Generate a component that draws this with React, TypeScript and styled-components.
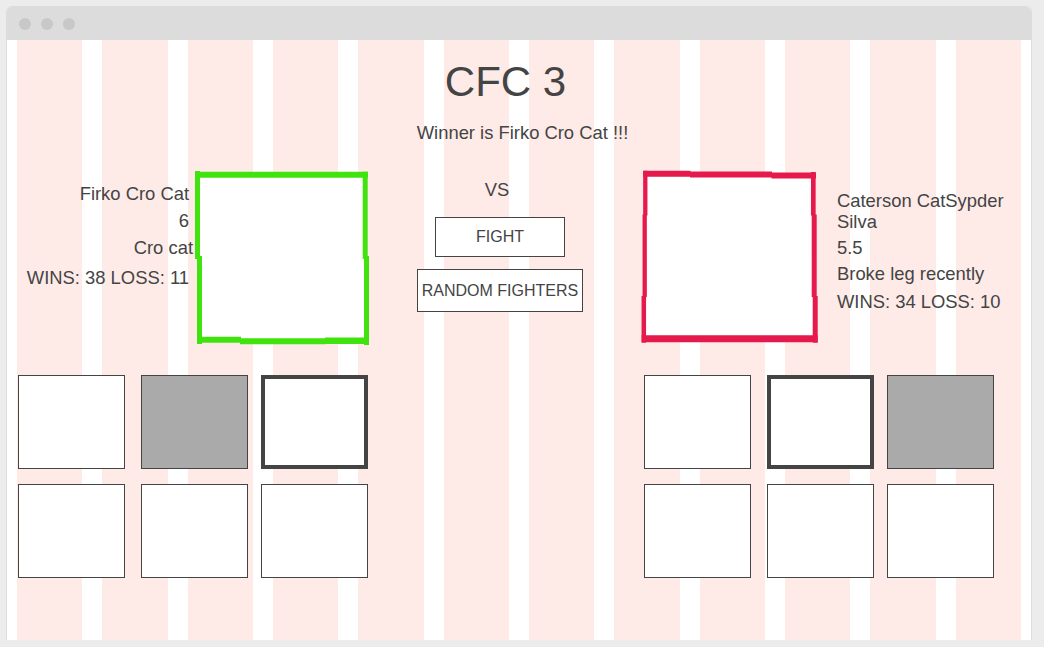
import styled, { createGlobalStyle } from 'styled-components';

const GlobalStyle = createGlobalStyle`
    body {
        margin: 0;
        background: #ececec;
        font-family: 'Liberation Sans', Arial, sans-serif;
        color: #444;
    }
`;

const Window = styled.div`
    width: 1024px;
    margin: 7px 0 0 7px;
    background: #fff;
    border-radius: 5px 5px 0 0;
    box-shadow: 0 0 0 1px #dcdcdc;
    overflow: hidden;
`;

const TitleBar = styled.div`
    height: 33px;
    background: #dcdcdc;
    display: flex;
    align-items: center;
    gap: 10px;
    padding-left: 12px;
`;

const Dot = styled.span`
    width: 12px;
    height: 12px;
    border-radius: 50%;
    background: #c8c8c8;
`;

const Content = styled.div`
    height: 600px;
    box-sizing: border-box;
    padding: 0 10px;
    background-image: repeating-linear-gradient(
        to right,
        #feebe8 0,
        #feebe8 65.33px,
        #fff 65.33px,
        #fff 85.33px
    );
    background-clip: content-box;
    background-origin: content-box;
`;

const Header = styled.div`
    display: flex;
    flex-direction: column;
    align-items: center;
    padding-top: 18px;
`;

const Title = styled.h1`
    margin: 0;
    padding-right: 27px;
    font-size: 42px;
    line-height: 48px;
    font-weight: normal;
`;

const Winner = styled.div`
    margin-top: 16px;
    padding-left: 7px;
    font-size: 18.4px;
    line-height: 21px;
`;

const FightersRow = styled.div`
    display: flex;
    align-items: flex-start;
    height: 175px;
    margin-top: 27px;
`;

const Fighter = styled.div`
    display: flex;
    align-items: flex-start;
`;

const FighterInfo = styled.div<{ $right?: boolean; $width: number; $top: number; $gap: number }>`
    width: ${({ $width }) => $width}px;
    margin-top: ${({ $top }) => $top}px;
    margin-left: ${({ $right }) => ($right ? 18 : 0)}px;
    display: flex;
    flex-direction: column;
    gap: ${({ $gap }) => $gap}px;
    text-align: ${({ $right }) => ($right ? 'left' : 'right')};
    font-size: 18.4px;
    line-height: 21px;
`;

const InfoLine = styled.div<{ $extra?: number; $shift?: number }>`
    margin-top: ${({ $extra }) => $extra || 0}px;
    margin-right: ${({ $shift }) => -($shift || 0)}px;
`;

const Middle = styled.div`
    width: 166px;
    margin: 0 58px 0 47px;
    padding-top: 9px;
    display: flex;
    flex-direction: column;
    align-items: center;
`;

const Vs = styled.div`
    font-size: 18.4px;
    line-height: 21px;
    margin-right: 6px;
`;

const ActionButton = styled.button<{ $width: number; $height: number }>`
    width: ${({ $width }) => $width}px;
    height: ${({ $height }) => $height}px;
    padding: 0;
    background: #fff;
    border: 1px solid #444;
    color: #444;
    font-family: 'Liberation Sans', Arial, sans-serif;
    font-size: 16px;
    margin-top: 12px;

    &:first-of-type {
        margin-top: 17px;
    }
`;

const BoxFrame = styled.svg<{ $top: number; $left: number }>`
    display: block;
    flex-shrink: 0;
    margin-top: ${({ $top }) => $top}px;
    margin-left: ${({ $left }) => $left}px;
`;

const ThumbsRow = styled.div`
    display: flex;
    margin-top: 30px;
    padding-left: 1px;
`;

const ThumbGrid = styled.div<{ $right?: boolean }>`
    display: grid;
    grid-template-columns: 123px 120px 107px;
    grid-auto-rows: 94px;
    row-gap: 15px;
    margin-left: ${({ $right }) => ($right ? 'auto' : '0')};
    margin-right: ${({ $right }) => ($right ? '27px' : '0')};
`;

const Thumb = styled.div<{ $bold?: boolean; $gray?: boolean }>`
    box-sizing: border-box;
    width: 107px;
    height: 94px;
    border: ${({ $bold }) => ($bold ? 4 : 1)}px solid #444;
    background: ${({ $gray }) => ($gray ? '#aaa' : '#fff')};
`;

type Seg = [number, number, number, number, number];

const greenSegs: Seg[] = [
    [0, 3.7, 173, 3.7, 6],
    [2.5, 0, 2.5, 88, 5],
    [4.5, 85, 4.5, 173, 5],
    [2, 168.7, 46, 168.7, 6],
    [45, 170.2, 131, 170.2, 6],
    [130, 169.8, 174, 169.8, 6.5],
    [170.2, 0.7, 170.2, 88, 5],
    [171.5, 85, 171.5, 174, 5],
];

const redSegs: Seg[] = [
    [2.3, 3.7, 49.5, 3.7, 6],
    [49, 4.5, 131, 4.5, 6],
    [130.5, 5.5, 175, 5.5, 6],
    [4.3, 0.7, 4.3, 45.5, 4.3],
    [3.7, 44.5, 3.7, 127, 4.3],
    [2.8, 126, 2.8, 172.7, 4.5],
    [0.7, 168.8, 176.7, 168.8, 7],
    [172.3, 2, 172.3, 45.5, 4.7],
    [173.2, 44.5, 173.2, 127, 5],
    [174.2, 126, 174.2, 172.7, 5],
];

function SketchBox({ color, segs, w, h, top, left, fill }: {
    color: string; segs: Seg[]; w: number; h: number; top: number; left: number;
    fill: [number, number, number, number];
}) {
    return (
        <BoxFrame width={w} height={h} viewBox={`0 0 ${w} ${h}`} $top={top} $left={left}>
            <rect x={fill[0]} y={fill[1]} width={fill[2]} height={fill[3]} fill="#fff" />
            {segs.map(([x1, y1, x2, y2, sw], i) => (
                <line key={i} x1={x1} y1={y1} x2={x2} y2={y2} stroke={color} strokeWidth={sw} />
            ))}
        </BoxFrame>
    );
}

function App() {
    return (
        <>
            <GlobalStyle />
            <Window>
                <TitleBar>
                    <Dot />
                    <Dot />
                    <Dot />
                </TitleBar>
                <Content>
                    <Header>
                        <Title>CFC 3</Title>
                        <Winner>Winner is Firko Cro Cat !!!</Winner>
                    </Header>

                    <FightersRow>
                        <Fighter>
                            <FighterInfo $width={172} $top={13} $gap={6}>
                                <InfoLine>Firko Cro Cat</InfoLine>
                                <InfoLine>6</InfoLine>
                                <InfoLine $shift={4}>Cro cat</InfoLine>
                                <InfoLine $extra={2.5}>WINS: 38 LOSS: 11</InfoLine>
                            </FighterInfo>
                            <SketchBox color="#41e30f" segs={greenSegs} w={175} h={175} top={1} left={6} fill={[2, 3, 170, 167]} />
                        </Fighter>

                        <Middle>
                            <Vs>VS</Vs>
                            <ActionButton $width={130} $height={40}>FIGHT</ActionButton>
                            <ActionButton $width={166} $height={43}>RANDOM FIGHTERS</ActionButton>
                        </Middle>

                        <Fighter>
                            <SketchBox color="#e5194b" segs={redSegs} w={178} h={174} top={0} left={0} fill={[4, 5, 169, 162]} />
                            <FighterInfo $right $width={184} $top={20} $gap={5}>
                                <InfoLine>Caterson CatSypder Silva</InfoLine>
                                <InfoLine>5.5</InfoLine>
                                <InfoLine>Broke leg recently</InfoLine>
                                <InfoLine $extra={1.5}>WINS: 34 LOSS: 10</InfoLine>
                            </FighterInfo>
                        </Fighter>
                    </FightersRow>

                    <ThumbsRow>
                        <ThumbGrid>
                            <Thumb />
                            <Thumb $gray />
                            <Thumb $bold />
                            <Thumb />
                            <Thumb />
                            <Thumb />
                        </ThumbGrid>
                        <ThumbGrid $right>
                            <Thumb />
                            <Thumb $bold />
                            <Thumb $gray />
                            <Thumb />
                            <Thumb />
                            <Thumb />
                        </ThumbGrid>
                    </ThumbsRow>
                </Content>
            </Window>
        </>
    );
}

export default App;
